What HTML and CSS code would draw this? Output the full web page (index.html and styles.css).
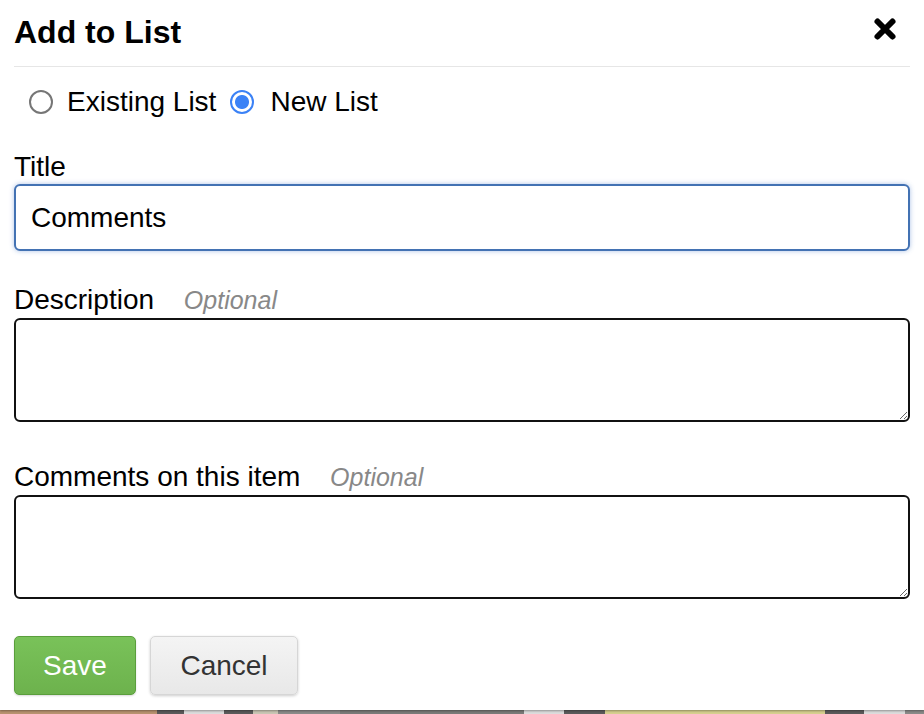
FILE: index.html
```html
<!DOCTYPE html>
<html>
<head>
<meta charset="utf-8">
<link rel="stylesheet" href="styles.css">
</head>
<body>
<div class="modal">
  <div class="modal-header">
    <h1 class="modal-title">Add to List</h1>
    <button class="close" aria-label="Close">
      <svg width="24" height="24" viewBox="0 0 24 24"><path d="M4.5 4.5 L19.5 19.5 M19.5 4.5 L4.5 19.5" stroke="#000" stroke-width="6" stroke-linecap="round" fill="none"/></svg>
    </button>
  </div>
  <div class="radio-row">
    <label class="radio"><input type="radio" name="mode"> <span>Existing List</span></label>
    <label class="radio"><input type="radio" name="mode" checked> <span>New List</span></label>
  </div>
  <div class="field field-title">
    <label class="field-label">Title</label>
    <input class="text-input" type="text" value="Comments">
  </div>
  <div class="field field-desc">
    <label class="field-label">Description <span class="optional">Optional</span></label>
    <textarea class="text-area"></textarea>
  </div>
  <div class="field field-comments">
    <label class="field-label">Comments on this item <span class="optional">Optional</span></label>
    <textarea class="text-area"></textarea>
  </div>
  <div class="actions">
    <button class="btn btn-save">Save</button>
    <button class="btn btn-cancel">Cancel</button>
  </div>
</div>
<div class="backdrop">
  <div class="seg s-tan" style="width:157px"></div>
  <div class="seg s-dark" style="width:27px"></div>
  <div class="seg s-light" style="width:40px"></div>
  <div class="seg s-dark" style="width:29px"></div>
  <div class="seg s-beige" style="width:25px"></div>
  <div class="seg s-mid" style="width:62px"></div>
  <div class="seg s-mid2" style="width:184px"></div>
  <div class="seg s-light" style="width:40px"></div>
  <div class="seg s-dark" style="width:41px"></div>
  <div class="seg s-yellow" style="width:220px"></div>
  <div class="seg s-dark" style="width:39px"></div>
  <div class="seg s-light" style="width:41px"></div>
  <div class="seg s-mid" style="width:19px"></div>
</div>
</body>
</html>
```
FILE: styles.css
```css
* { box-sizing: border-box; }
html, body { margin: 0; padding: 0; }
body {
  font-family: "Liberation Sans", Arial, Helvetica, sans-serif;
  color: #000;
  background: #888;
  width: 924px;
  height: 714px;
  overflow: hidden;
}
.modal {
  background: #fff;
  height: 710px;
  padding: 12px 14px 14px;
  box-shadow: 0 1px 2px rgba(0,0,0,0.35);
  position: relative;
  z-index: 1;
}
.modal-header {
  display: flex;
  align-items: flex-start;
  justify-content: space-between;
  height: 55px;
  border-bottom: 1px solid #e6e6e6;
}
.modal-title {
  margin: 0;
  font-size: 32px;
  line-height: 40px;
  font-weight: bold;
}
.close {
  border: 0;
  background: none;
  padding: 0;
  margin: 5px 13px 0 0;
  width: 24px;
  height: 24px;
  display: block;
}
.close svg { display: block; }
.radio-row {
  display: flex;
  align-items: center;
  height: 36px;
  margin-top: 17px;
  padding-left: 15px;
  font-size: 28px;
  line-height: 36px;
}
.radio {
  display: flex;
  align-items: center;
}
.radio + .radio { margin-left: 14px; }
.radio input {
  appearance: none;
  -webkit-appearance: none;
  width: 24px;
  height: 24px;
  margin: 0 14px 0 0;
  border: 2px solid #767676;
  border-radius: 50%;
  background: #fff;
}
.radio input:checked {
  border-color: #3b82f6;
  background: radial-gradient(circle, #3b82f6 0 6.5px, #fff 7.5px);
  margin-right: 16px;
}
.field { display: block; }
.field-title { margin-top: 31px; }
.field-desc { margin-top: 33px; }
.field-comments { margin-top: 39px; }
.field-label {
  display: block;
  font-size: 28px;
  line-height: 32px;
  height: 32px;
}
.optional {
  font-style: italic;
  color: #888;
  font-size: 25px;
  margin-left: 22px;
}
.field-title .field-label { margin-bottom: 1px; }
.field-desc .field-label, .field-comments .field-label { margin-bottom: 2px; }
.text-input {
  display: block;
  width: 100%;
  height: 67px;
  border: 2px solid #4372b3;
  border-radius: 6px;
  box-shadow: 0 0 5px rgba(70,120,200,0.45);
  padding: 0 15px;
  font-family: "Liberation Sans", Arial, sans-serif;
  font-size: 28px;
  color: #000;
  outline: none;
}
.text-area {
  display: block;
  width: 100%;
  height: 104px;
  border: 2px solid #111;
  border-radius: 6px;
  font-family: "Liberation Sans", Arial, sans-serif;
  font-size: 28px;
  padding: 8px 15px;
  resize: vertical;
  outline: none;
}
.actions {
  display: flex;
  gap: 14px;
  margin-top: 37px;
}
.btn {
  height: 59px;
  font-family: "Liberation Sans", Arial, sans-serif;
  font-size: 28px;
  border-radius: 5px;
  padding: 0 28px;
}
.btn-save {
  width: 122px;
  color: #fff;
  background: linear-gradient(#79c259, #6db24d);
  border: 1px solid #5a9e3c;
  box-shadow: 0 1px 2px rgba(0,0,0,0.15);
}
.btn-cancel {
  width: 148px;
  color: #333;
  background: linear-gradient(#f4f4f4, #e8e8e8);
  border: 1px solid #d6d6d6;
  box-shadow: 0 1px 3px rgba(0,0,0,0.2);
}
.backdrop {
  display: flex;
  height: 4px;
  background: #ccc;
}
.seg { height: 4px; flex: none; }
.s-tan { background: #b8926f; }
.s-dark { background: #5a5a5a; }
.s-light { background: #dcdcdc; }
.s-beige { background: #c9c6b4; }
.s-mid { background: #8a8a88; }
.s-mid2 { background: #7a7a78; }
.s-yellow { background: #d6cf8e; }
```
